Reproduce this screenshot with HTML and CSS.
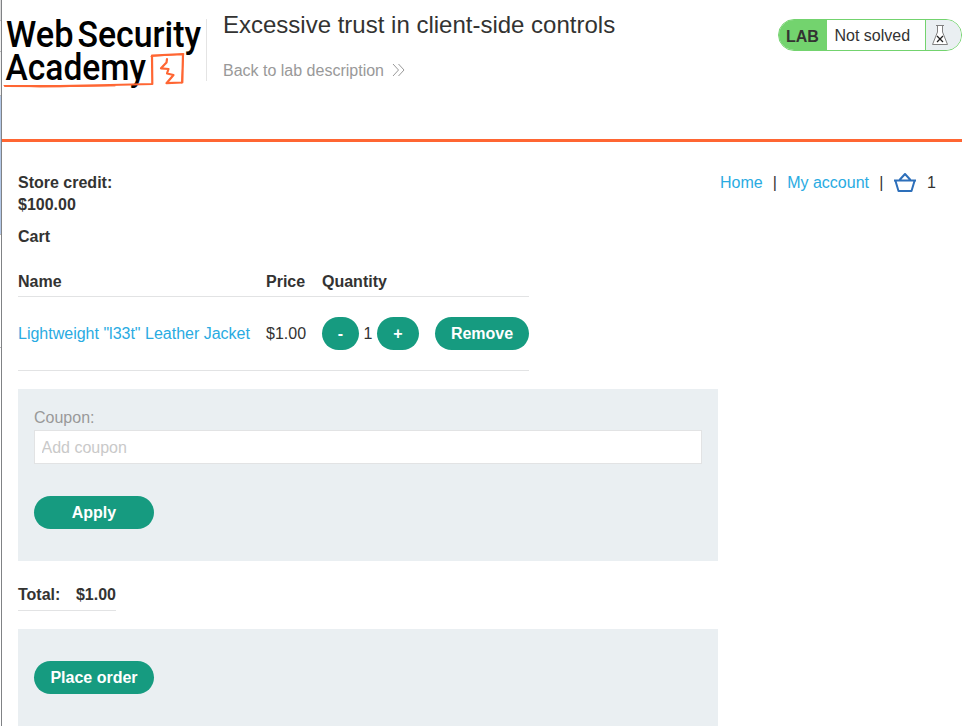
FILE: index.html
```html
<!DOCTYPE html>
<html lang="en">
<head>
<meta charset="utf-8">
<title>Excessive trust in client-side controls</title>
<link rel="stylesheet" href="styles.css">
</head>
<body>
<div class="frame">
  <div class="gutter"><i class="g1"></i><i class="g2"></i><i class="g3"></i><i class="g4"></i><i class="g5"></i><i class="g6"></i></div>
  <div class="page">
    <header class="lab-header">
      <svg class="logo" width="204" height="100" viewBox="2 0 204 100" role="img">
        <g class="wordmark">
          <text x="6" y="47.3" textLength="67.500" lengthAdjust="spacingAndGlyphs">Web</text>
          <text x="77.500" y="47.3" textLength="123.500" lengthAdjust="spacingAndGlyphs">Security</text>
          <text x="5.500" y="80" textLength="140.500" lengthAdjust="spacingAndGlyphs">Academy</text>
        </g>
        <path class="sketch" d="M5 86L60 86.200L110 85L152.300 84L152 55.500L183 54.200L182.300 82.500L166.500 83.200L173.500 75L167 73.500L168.500 69L161 68.300L166.500 62.500L167 59"/>
        <path class="sketch thin" d="M4 85.500L40 86.900L115 85.900M151 56.500L184 54M183.500 54L181.500 83"/>
      </svg>
      <div class="title-box">
        <h2>Excessive trust in client-side controls</h2>
        <a class="back" href="#"><span>Back to lab description</span>
          <svg width="13" height="14" viewBox="0 0 13 14"><path d="M1 1l5.500 6L1 13M6.500 1l5.500 6-5.500 6"/></svg>
        </a>
      </div>
      <div class="status">
        <b>LAB</b><span>Not solved</span>
        <div class="flask"><svg width="18" height="22" viewBox="0 0 18 22"><path class="glass" d="M5 1.500h8M6.500 2v6L1.500 20.500h15L11.500 8V2"/><path class="cross" d="M6 12l6 6M12 12l-6 6"/></svg></div>
      </div>
    </header>
    <main>
      <div class="top">
        <div class="credit">Store credit:<br>$100.00</div>
        <nav><a href="#">Home</a><i>|</i><a class="account" href="#">My account</a><i>|</i>
          <svg width="24" height="20" viewBox="0 0 24 20"><path d="M1 7.500h22M2.500 8l3 10h13l3-10M6.500 7L12 1l5.500 6"/></svg><span>1</span></nav>
      </div>
      <h1>Cart</h1>
      <div class="cart">
        <div class="row head"><span>Name</span><span>Price</span><span>Quantity</span><span></span></div>
        <div class="row item"><a href="#">Lightweight "l33t" Leather Jacket</a><span>$1.00</span>
          <div class="quantity"><button class="minus">-</button><span>1</span><button class="plus">+</button></div><button class="remove">Remove</button></div>
      </div>
      <form class="panel coupon">
        <label>Coupon:</label>
        <input type="text" placeholder="Add coupon">
        <button type="button" class="wide">Apply</button>
      </form>
      <div class="total"><span>Total:</span><span>$1.00</span></div>
      <form class="panel order"><button type="button" class="wide">Place order</button></form>
    </main>
  </div>
</div>
</body>
</html>
```
FILE: styles.css
```css
* { box-sizing: border-box; }
body { margin: 0; background: #fff; color: #333332; font: 16px/22px "Liberation Sans", Arial, sans-serif; }
a { color: #29abe2; text-decoration: none; }
i { font-style: normal; }
.frame { display: flex; height: 726px; overflow: hidden; }
.gutter { width: 2px; flex: none; display: flex; flex-direction: column; border-right: 1px solid #808285; }
.gutter i { border-bottom: 1px solid #b9b9b9; background: #fff; }
.gutter .g1 { height: 21px; background: #ddd; }
.gutter .g2 { height: 31px; background: #f0f0f0; }
.gutter .g3 { height: 44px; background: #f0f0f0; }
.gutter .g4 { height: 139px; background: #b3c8e8; }
.gutter .g5 { height: 113px; }
.gutter .g6 { flex: 1; border: 0; }
.page { flex: 1; min-width: 0; }
.lab-header { height: 142px; display: flex; align-items: flex-start; border-bottom: 3px solid #ff6633; }
.logo { flex: none; overflow: visible; }
.wordmark { font: 500 37.5px/1 Roboto, sans-serif; fill: #000; }
.sketch { fill: none; stroke: #ff6633; stroke-width: 2.2; stroke-linejoin: round; stroke-linecap: round; }
.thin { stroke-width: 1; }
.title-box { height: 62px; margin-top: 19px; padding-left: 16px; border-left: 1px solid #e4e4e4; flex: 1; }
h2 { margin: -10px 0 0; font-size: 24px; line-height: 32px; font-weight: 400; }
.back { display: flex; align-items: center; margin-top: 18px; color: #999; }
.back span { padding-top: 2px; line-height: 20px; }
.back svg { margin-left: 8px; fill: none; stroke: #999; stroke-width: 1; }
.status { display: flex; width: 184px; height: 32px; margin-top: 19px; border: 1px solid #73d36e; border-radius: 16px; overflow: hidden; line-height: 32px; }
.status b { width: 48px; padding: 1px 0 0 7px; background: #73d36e; }
.status span { width: 98px; padding-left: 7.5px; }
.flask { flex: 1; border-left: 1px solid #73d36e; background: #eaeff2; padding: 4px 0 0 5px; line-height: 0; }
.flask svg { fill: none; }
.glass { stroke: #808080; stroke-width: 1; fill: #fff; }
.cross { stroke: #222; stroke-width: 1.3; }
main { padding: 30px 26px 0 16px; }
.top { display: flex; justify-content: space-between; height: 44px; font-weight: 700; }
nav { display: flex; height: 22px; font-weight: 400; }
nav i { width: 24.500px; text-align: center; }
nav svg { margin: 1px 10px 0 -.4px; fill: none; stroke: #2d6fba; stroke-width: 2; stroke-linejoin: round; }
h1 { margin: 10px 0 0; font-size: 16px; line-height: 22px; }
.cart { width: 511px; margin-top: 19px; }
.row { display: grid; grid-template-columns: 248px 56px 113px 94px; align-items: center; border-bottom: 1px solid #e2e3e4; }
.head { height: 30px; align-items: start; padding-top: 4px; font-weight: 700; }
.item { height: 74px; }
.quantity { display: flex; align-items: center; gap: 4.5px; }
button { height: 33px; padding: 0; border: 0; border-radius: 17px; background: #169b80; color: #fff; font: 700 16px/33px "Liberation Sans", Arial, sans-serif; text-align: center; }
.minus { width: 37px; }
.plus { width: 42px; }
.remove { width: 94px; }
.wide { display: block; width: 120px; }
.panel { width: 700px; margin: 0; padding: 16px; background: #eaeff2; }
.coupon { height: 172px; margin-top: 18px; padding-top: 18px; }
label { display: block; height: 23px; color: #999; }
input { display: block; width: 668px; height: 34px; margin-bottom: 32px; padding: 1px 7px 0 6.5px; border: 1px solid #e2e3e4; font: 16px "Liberation Sans", Arial, sans-serif; }
input::placeholder { color: #c9c9c9; opacity: 1; }
.total { display: flex; justify-content: space-between; width: 98px; height: 27px; margin-top: 23px; border-bottom: 1px solid #e2e3e4; font-weight: 700; }
.order { height: 120px; margin-top: 18px; padding-top: 32px; }
```
